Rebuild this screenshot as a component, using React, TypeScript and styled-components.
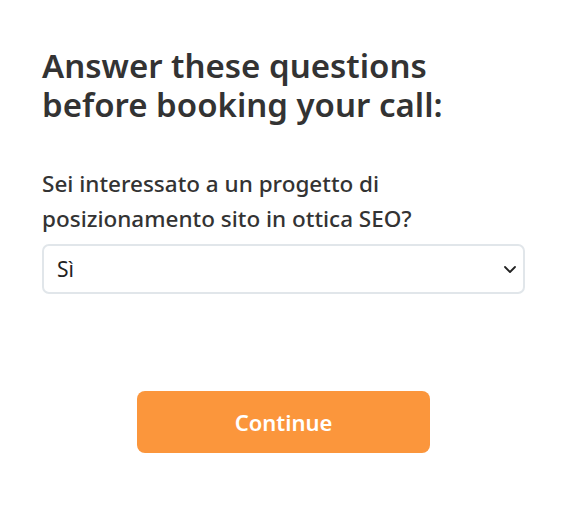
import React from "react";
import styled, { createGlobalStyle } from "styled-components";

const Global = createGlobalStyle`
  html, body { margin: 0; padding: 0; background: #ffffff; }
  body { font-family: "Noto Sans", "Open Sans", sans-serif; color: #333333; }
`;

const Page = styled.div`
  padding: 46px 41px 40px 42px;
  display: flex;
  flex-direction: column;
`;

const Title = styled.h1`
  margin: 0;
  font-size: 33px;
  line-height: 39px;
  font-weight: 600;
  color: #333333;
`;

const Field = styled.div`
  margin-top: 42px;
  display: flex;
  flex-direction: column;
  gap: 8px;
`;

const Label = styled.label`
  font-size: 22.5px;
  line-height: 35px;
  font-weight: 500;
  color: #333333;
`;

const SelectWrap = styled.div`
  position: relative;
`;

const Select = styled.select`
  appearance: none;
  width: 100%;
  height: 50px;
  box-sizing: border-box;
  border: 2px solid #e1e6ea;
  border-radius: 7px;
  background: #ffffff;
  padding: 0 40px 0 13px;
  font-family: "Noto Sans", "Open Sans", sans-serif;
  font-size: 21px;
  color: #222222;
`;

const Chevron = styled.svg`
  position: absolute;
  right: 7px;
  top: 50%;
  transform: translateY(-50%);
  pointer-events: none;
`;

const Actions = styled.div`
  display: flex;
  justify-content: center;
  margin-top: 97px;
`;

const Button = styled.button`
  width: 293px;
  height: 62px;
  border: none;
  border-radius: 8px;
  background: #fb963c;
  color: #ffffff;
  font-family: "Noto Sans", "Open Sans", sans-serif;
  font-size: 22px;
  font-weight: 600;
  cursor: pointer;
`;

export default function App() {
  return (
    <>
      <Global />
      <Page>
        <Title>
          Answer these questions
          <br />
          before booking your call:
        </Title>
        <Field>
          <Label htmlFor="q1">
            Sei interessato a un progetto di
            <br />
            posizionamento sito in ottica SEO?
          </Label>
          <SelectWrap>
            <Select id="q1" defaultValue="si">
              <option value="si">Sì</option>
              <option value="no">No</option>
            </Select>
            <Chevron width="16" height="16" viewBox="0 0 16 16">
              <path d="M3 6 L8 11 L13 6" fill="none" stroke="#222" strokeWidth="1.8" strokeLinecap="round" strokeLinejoin="round" />
            </Chevron>
          </SelectWrap>
        </Field>
        <Actions>
          <Button type="button">Continue</Button>
        </Actions>
      </Page>
    </>
  );
}
